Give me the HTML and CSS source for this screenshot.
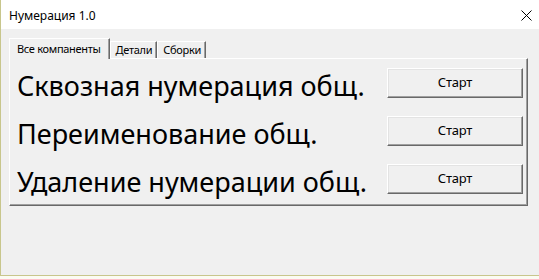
FILE: index.html
```html
<!DOCTYPE html>
<html lang="ru">

<head>
    <meta charset="UTF-8">
    <title>Нумерация 1.0</title>
    <link rel="stylesheet" href="styles.css">
</head>

<body>
    <div class="window">
        <div class="titlebar">
            <div class="caption">Нумерация 1.0</div>
            <div class="close">
                <svg width="11" height="11" viewBox="0 0 11 11">
                    <path d="M0.5 0.5 L10.5 10.5 M10.5 0.5 L0.5 10.5" stroke="#000" stroke-width="1" fill="none" />
                </svg>
            </div>
        </div>
        <div class="client">
            <div class="tabs">
                <div class="tab active">Все компаненты</div>
                <div class="tab">Детали</div>
                <div class="tab">Сборки</div>
            </div>
            <div class="page">
                <div class="row">
                    <div class="label">Сквозная нумерация общ.</div>
                    <button class="btn">Старт</button>
                </div>
                <div class="row">
                    <div class="label">Переименование общ.</div>
                    <button class="btn">Старт</button>
                </div>
                <div class="row">
                    <div class="label">Удаление нумерации общ.</div>
                    <button class="btn">Старт</button>
                </div>
            </div>
        </div>
    </div>
</body>

</html>
```

FILE: styles.css
```css
* {
    box-sizing: border-box;
}

body {
    margin: 0;
    background-color: #fbfbf3;
    font-family: "Noto Sans", "Open Sans", sans-serif;
    color: #000;
}

.window {
    width: 539px;
    height: 276px;
    display: flex;
    flex-direction: column;
    border-left: 1px solid #c8c68c;
    border-bottom: 1px solid #c8c68c;
}

.titlebar {
    height: 29px;
    display: flex;
    align-items: center;
    justify-content: space-between;
    background-color: #fff;
    padding: 0 7px 0 8px;
}

.caption {
    font-size: 12px;
    margin-top: 1px;
}

.close {
    display: flex;
    margin-top: 1px;
}

.client {
    flex: 1;
    background-color: #f0f0f0;
    padding: 8px 0 0 8px;
}

.tabs {
    display: flex;
    align-items: flex-end;
    height: 21px;
    position: relative;
    z-index: 1;
}

.tab {
    height: 17px;
    font-size: 11px;
    line-height: 15px;
    letter-spacing: -0.3px;
    padding: 0 4px 0 5px;
    border: 1px solid #fff;
    border-right: 1px solid #696969;
    border-bottom: none;
    box-shadow: inset -1px 0 0 #a0a0a0;
    background-color: #f0f0f0;
}

.tab.active {
    line-height: 19px;
    padding: 0 8px 0 7px;
    margin-bottom: -1px;
    height: 21px;
}

.page {
    width: 519px;
    height: 148px;
    border: 1px solid #fff;
    border-right-color: #696969;
    border-bottom-color: #696969;
    box-shadow: inset -1px -1px 0 #a0a0a0;
    padding: 9px 4px 0 7px;
    display: flex;
    flex-direction: column;
    gap: 18px;
}

.row {
    display: flex;
    justify-content: space-between;
    align-items: center;
    height: 30px;
}

.label {
    font-size: 27px;
    line-height: 30px;
    margin-top: 6px;
    white-space: nowrap;
}

.btn {
    width: 136px;
    height: 30px;
    font-family: "Noto Sans", "Open Sans", sans-serif;
    font-size: 13px;
    letter-spacing: -0.2px;
    color: #000;
    background-color: #f0f0f0;
    border: 1px solid #fff;
    border-right-color: #696969;
    border-bottom-color: #696969;
    box-shadow: inset -1px -1px 0 #a0a0a0, inset 1px 1px 0 #e3e3e3;
    padding: 0 0 2px;
}
```
